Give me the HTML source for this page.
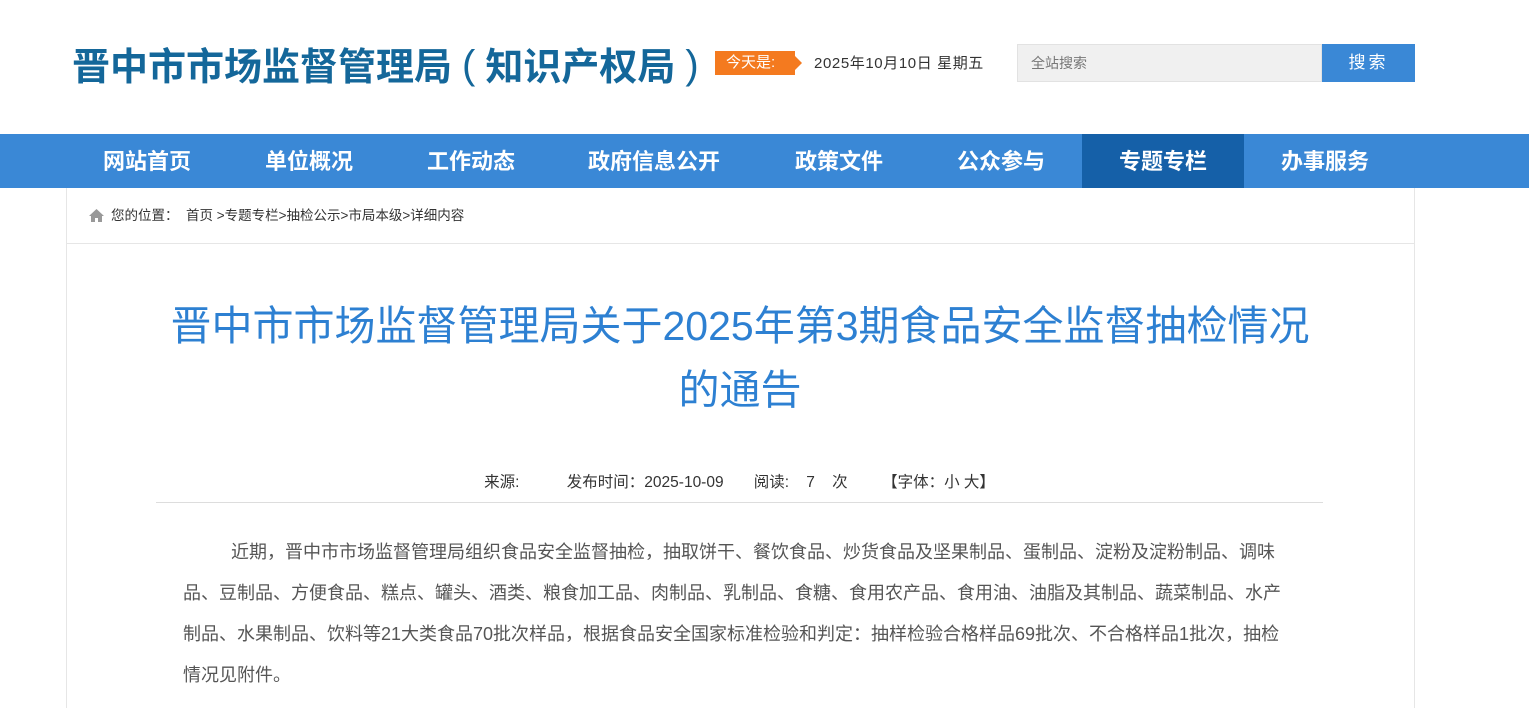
<!DOCTYPE html>
<html><head><meta charset="utf-8"><style>
*{margin:0;padding:0;box-sizing:border-box}
body{width:1529px;height:698px;overflow:hidden;background:#fff;font-family:"Liberation Sans","Noto Sans CJK SC",sans-serif;position:relative}
.logo{position:absolute;left:72px;top:36px;font-size:38px;font-weight:bold;color:#14679a;white-space:nowrap}
.logo .p{font-weight:normal;font-size:40px;display:inline-block;margin:0 10px;position:relative;top:-2px}
.today{position:absolute;left:715px;top:51px;width:80px;height:24px;background:#f47a1f;color:#fff;font-size:15px;line-height:24px;padding-left:11px}
.today:after{content:"";position:absolute;right:-7px;top:5px;border-left:7px solid #f47a1f;border-top:7px solid transparent;border-bottom:7px solid transparent}
.date{position:absolute;left:814px;top:52px;font-size:15px;color:#333;letter-spacing:0.6px}
.search{position:absolute;left:1017px;top:44px;width:305px;height:38px;background:#f0f0f0;border:1px solid #e2e2e2;font-size:14px;color:#777;line-height:36px;padding-left:13px}
.btn{position:absolute;left:1322px;top:44px;width:93px;height:38px;background:#3a88d6;color:#fff;font-size:17px;line-height:38px;text-align:center;letter-spacing:3px}
.nav{position:absolute;left:0;top:134px;width:1529px;height:54px;background:#3a88d6}
.nav div{position:absolute;top:0;width:162px;height:54px;line-height:56px;text-align:center;color:#fff;font-size:22px;font-weight:bold}
.nav .on{background:#1560a8}
.box{position:absolute;left:66px;top:188px;width:1349px;height:520px;border-left:1px solid #e6e6e6;border-right:1px solid #e6e6e6}
.crumb{position:absolute;left:0;top:0;width:1347px;height:56px;border-bottom:1px solid #e6e6e6;font-size:13.5px;color:#333;line-height:56px;padding-left:44px}
.house{position:absolute;left:22px;top:21px}
h1{position:absolute;left:0;top:294px;width:1480px;text-align:center;font-weight:normal;font-size:41px;color:#2d80d2;line-height:64px}
.meta{position:absolute;left:156px;top:470px;width:1167px;height:33px;border-bottom:1px solid #ddd;text-align:center;font-size:15.5px;color:#333}
.para{position:absolute;left:183px;top:532px;width:1105px;font-size:18px;color:#555;line-height:41px;text-indent:48px}
</style></head><body>
<div class="logo">晋中市市场监督管理局<span class="p">(</span>知识产权局<span class="p">)</span></div>
<div class="today">今天是:</div>
<div class="date">2025年10月10日 星期五</div>
<div class="search">全站搜索</div>
<div class="btn">搜索</div>
<div class="nav">
<div style="left:66px">网站首页</div><div style="left:228px">单位概况</div><div style="left:390px">工作动态</div><div style="left:552px;width:204px">政府信息公开</div><div style="left:758px">政策文件</div><div style="left:920px">公众参与</div><div class="on" style="left:1082px">专题专栏</div><div style="left:1244px">办事服务</div>
</div>
<div class="box">
<div class="crumb"><svg class="house" width="15" height="13" viewBox="0 0 15 13"><path d="M7.5 0L0 7h2v6h4V9h3v4h4V7h2z" fill="#999"/></svg>您的位置：&nbsp; 首页 &gt;专题专栏&gt;抽检公示&gt;市局本级&gt;详细内容</div>
</div>
<h1>晋中市市场监督管理局关于2025年第3期食品安全监督抽检情况<br>的通告</h1>
<div class="meta">来源:&nbsp;&nbsp;&nbsp;&nbsp;&nbsp;&nbsp;&nbsp;&nbsp;&nbsp;&nbsp; 发布时间：2025-10-09&nbsp;&nbsp;&nbsp;&nbsp;&nbsp;&nbsp; 阅读:&nbsp;&nbsp;&nbsp; 7&nbsp;&nbsp;&nbsp; 次&nbsp;&nbsp;&nbsp;&nbsp;&nbsp;&nbsp;&nbsp; 【字体：小 大】</div>
<div class="para">近期，晋中市市场监督管理局组织食品安全监督抽检，抽取饼干、餐饮食品、炒货食品及坚果制品、蛋制品、淀粉及淀粉制品、调味品、豆制品、方便食品、糕点、罐头、酒类、粮食加工品、肉制品、乳制品、食糖、食用农产品、食用油、油脂及其制品、蔬菜制品、水产制品、水果制品、饮料等21大类食品70批次样品，根据食品安全国家标准检验和判定：抽样检验合格样品69批次、不合格样品1批次，抽检情况见附件。</div>
</body></html>
